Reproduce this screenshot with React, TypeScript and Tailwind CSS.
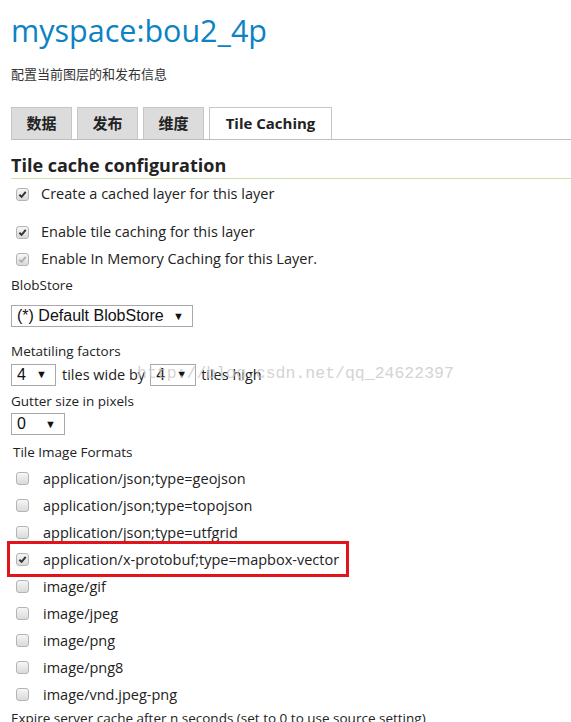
import React from 'react';

const sans = "font-['Open_Sans','Noto_Sans_CJK_SC',sans-serif]";

function Check({ checked = false, disabled = false }: { checked?: boolean; disabled?: boolean }) {
  return (
    <span className="inline-flex h-[13px] w-[13px] shrink-0 items-center justify-center rounded-[3px] border border-[#b4b4b4] bg-gradient-to-b from-[#f6f6f6] to-[#dadada]">
      {checked && (
        <svg viewBox="0 0 10 10" className="h-[9px] w-[9px]">
          <path
            d="M1.5 5.2 L4 7.6 L8.6 2.2"
            fill="none"
            stroke={disabled ? '#b0b0b0' : '#333'}
            strokeWidth="2.2"
          />
        </svg>
      )}
    </span>
  );
}

function FakeSelect({ value, width }: { value: string; width: string }) {
  return (
    <div
      className={`flex h-[22px] ${width} items-center justify-between border border-[#a9a9a9] bg-white pl-[5px] pr-[8px] font-['Liberation_Sans',sans-serif] text-[16px] text-[#111]`}
    >
      <span>{value}</span>
      <span className="text-[11px]">▼</span>
    </div>
  );
}

const formats = [
  { label: 'application/json;type=geojson', checked: false },
  { label: 'application/json;type=topojson', checked: false },
  { label: 'application/json;type=utfgrid', checked: false },
  { label: 'application/x-protobuf;type=mapbox-vector', checked: true },
  { label: 'image/gif', checked: false },
  { label: 'image/jpeg', checked: false },
  { label: 'image/png', checked: false },
  { label: 'image/png8', checked: false },
  { label: 'image/vnd.jpeg-png', checked: false },
];

const tabs = ['数据', '发布', '维度'];

export default function App() {
  return (
    <div className={`h-[722px] w-[571px] overflow-hidden bg-white pl-[11px] ${sans} text-[#222]`}>
      <h1 className="pt-[12px] text-[30.5px] leading-[36px] text-[#0b82c3]">myspace:bou2_4p</h1>
      <p className="mt-[17px] text-[13px] leading-[18px] text-[#333]">配置当前图层的和发布信息</p>

      {/* tabs */}
      <div className="mt-[24px] flex h-[33px] items-end gap-[5px] border-b border-[#bdbdbd]">
        {tabs.map((t) => (
          <div
            key={t}
            className="flex h-[32px] w-[61px] items-center justify-center border border-b-0 border-[#c6c6c6] bg-[#dcdcdc] text-[15px] font-bold"
          >
            {t}
          </div>
        ))}
        <div className="flex h-[32px] w-[123px] items-center justify-center border border-b-0 border-[#c6c6c6] bg-white text-[15px] font-bold">
          Tile Caching
        </div>
      </div>

      <h2 className="mt-[13px] border-b border-[#c9e0a8] pb-[1px] text-[18px] font-bold leading-[24px] text-[#222]">
        Tile cache configuration
      </h2>

      <div className="mt-[5px] flex h-[20px] items-center gap-[12px] pl-[5px] text-[14.5px]">
        <Check checked />
        <span>Create a cached layer for this layer</span>
      </div>
      <div className="mt-[18px] flex h-[20px] items-center gap-[12px] pl-[5px] text-[14.5px]">
        <Check checked />
        <span>Enable tile caching for this layer</span>
      </div>
      <div className="mt-[7px] flex h-[20px] items-center gap-[12px] pl-[5px] text-[14.5px]">
        <Check checked disabled />
        <span>Enable In Memory Caching for this Layer.</span>
      </div>

      <div className="mt-[7px] flex h-[18px] items-center text-[13.5px]">BlobStore</div>
      <div className="mt-[11px]">
        <FakeSelect value="(*) Default BlobStore" width="w-[182px]" />
      </div>

      <div className="mt-[15px] flex h-[18px] items-center text-[13.5px]">Metatiling factors</div>
      <div className="relative mt-[4px] flex h-[21px] items-center text-[14.5px]">
        <FakeSelect value="4" width="w-[45px]" />
        <span className="ml-[6px] mr-[5px]">tiles wide by</span>
        <FakeSelect value="4" width="w-[46px]" />
        <span className="ml-[5px]">tiles high</span>
        <span className="pointer-events-none absolute left-[126px] top-[-2px] font-['Liberation_Mono',monospace] text-[16.5px] text-[#c8c8c8]/80">
          http://blog.csdn.net/qq_24622397
        </span>
      </div>

      <div className="mt-[7px] flex h-[18px] items-center text-[13.5px]">Gutter size in pixels</div>
      <div className="mt-[3px]">
        <FakeSelect value="0" width="w-[54px]" />
      </div>

      <div className="mt-[8px] flex h-[18px] items-center pl-[2px] text-[13.5px]">Tile Image Formats</div>

      <div className="mt-[4px] flex flex-col">
        {formats.map((f) => (
          <div key={f.label} className="relative flex h-[27px] items-center gap-[14px] pl-[5px] text-[14.5px]">
            <Check checked={f.checked} />
            <span>{f.label}</span>
            {f.checked && (
              <div className="pointer-events-none absolute left-[-4px] top-[-5px] h-[36px] w-[342px] border-[3px] border-[#e3131b]" />
            )}
          </div>
        ))}
      </div>

      <div className="mt-[1px] text-[13.5px] leading-[18px]">
        Expire server cache after n seconds (set to 0 to use source setting)
      </div>
    </div>
  );
}
